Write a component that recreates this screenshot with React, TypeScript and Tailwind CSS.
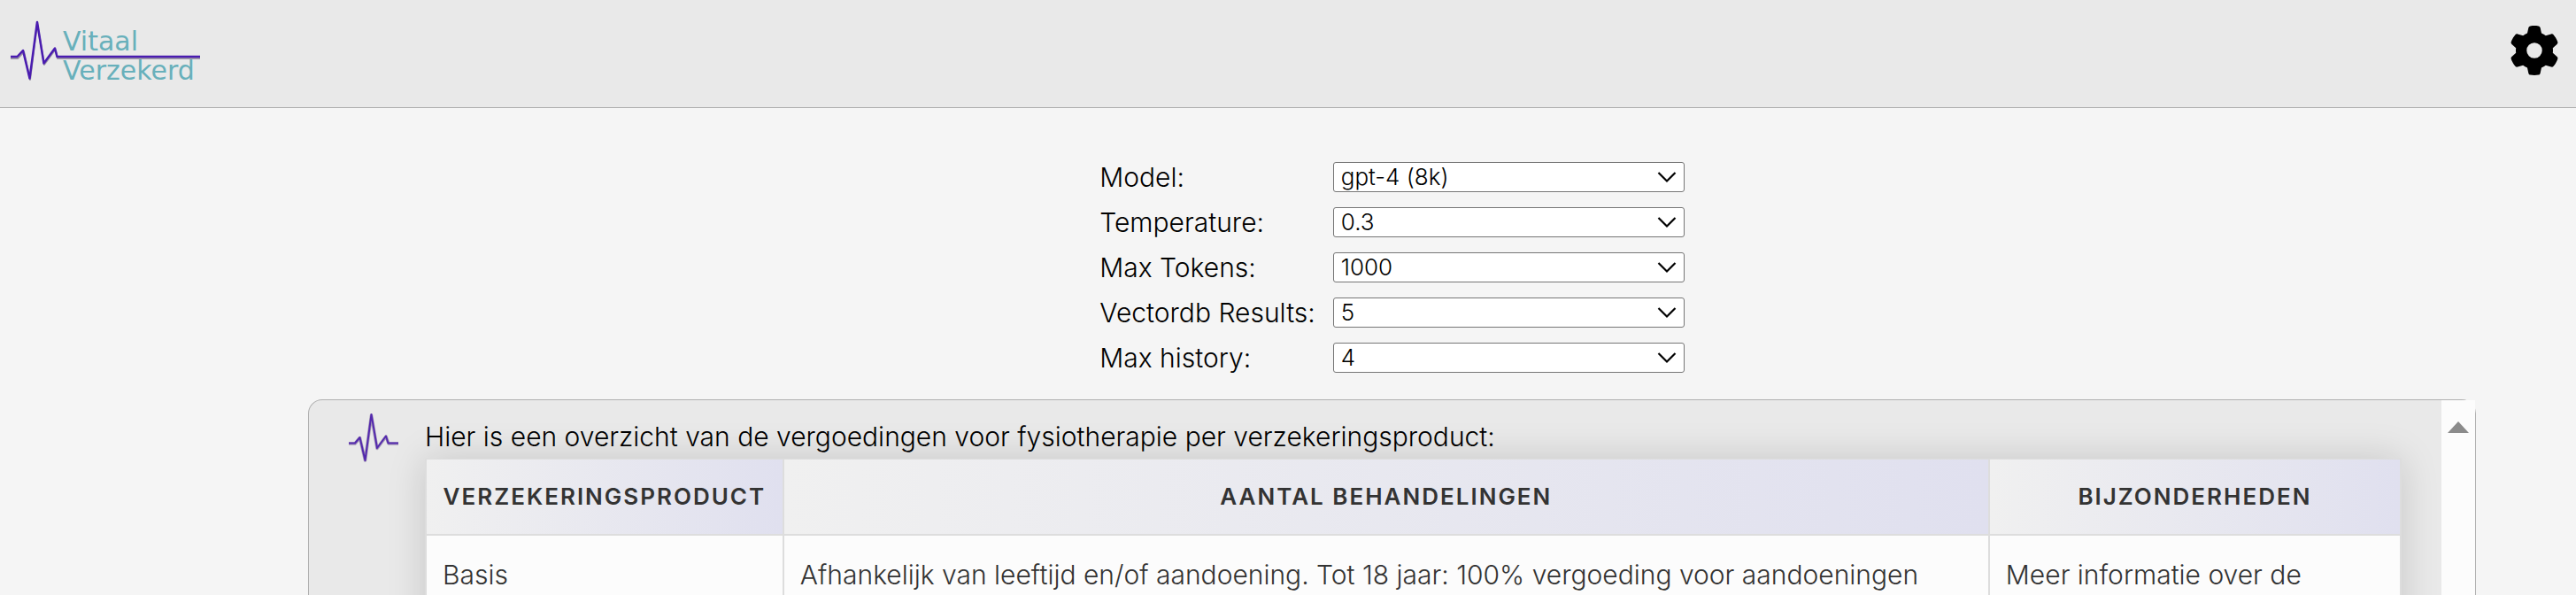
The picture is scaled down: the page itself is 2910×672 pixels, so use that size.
import React from "react";
import { FaGear } from "react-icons/fa6";

const settings = [
  { id: "model", label: "Model:", options: ["gpt-4 (8k)", "gpt-4 (32k)"] },
  { id: "temperature", label: "Temperature:", options: ["0.3", "0.7"] },
  { id: "max-tokens", label: "Max Tokens:", options: ["1000", "2000"] },
  { id: "vectordb-results", label: "Vectordb Results:", options: ["5", "10"] },
  { id: "max-history", label: "Max history:", options: ["4", "8"] },
];

const columns = ["Verzekeringsproduct", "Aantal behandelingen", "Bijzonderheden"];

const rows = [
  [
    "Basis",
    "Afhankelijk van leeftijd en/of aandoening. Tot 18 jaar: 100% vergoeding voor aandoeningen",
    "Meer informatie over de",
  ],
];

function Logo() {
  return (
    <a href="#" aria-label="Vitaal Verzekerd" className="block">
      <svg width="232" height="121" viewBox="0 0 232 121" role="img" aria-label="Vitaal Verzekerd">
        <path
          d="M12 66H20L27 58.500L34 90L42 26.500L50 73L62.500 56L65 66H226"
          fill="none"
          stroke="#9c96a6"
          strokeWidth="2"
          strokeLinejoin="round"
        />
        <path
          d="M12 64H19.500L26 57L33.500 88.500L42 25L49.500 71.500L62 54.500L64.500 64H226"
          fill="none"
          stroke="#4a1cb0"
          strokeWidth="2.500"
          strokeLinejoin="round"
        />
        <g fill="#68b0bb" fontFamily="DejaVu Sans, sans-serif" fontSize="30" fontWeight="400">
          <text x="71" y="57">Vitaal</text>
          <text x="71" y="90">Verzekerd</text>
        </g>
      </svg>
    </a>
  );
}

function PulseIcon() {
  return (
    <svg width="56" height="56" viewBox="0 0 56 56" className="block shrink-0" aria-hidden="true">
      <path
        d="M0 34H7L12.500 27.500L18.500 53L25.500 2L32 39.500L42 26L45 34H56"
        fill="none"
        stroke="#a79bb8"
        strokeWidth="3.500"
        strokeLinejoin="round"
      />
      <path
        d="M0 33.500H7L12.500 27L18.500 53L25.500 1L32 39L42 25.500L44.500 33.500H56"
        fill="none"
        stroke="#5429ae"
        strokeWidth="2"
        strokeLinejoin="round"
      />
    </svg>
  );
}

function SettingsForm() {
  return (
    <form className="mx-auto grid grid-cols-[auto_397px] items-center gap-x-5 gap-y-[15px]">
      {settings.map((s) => (
        <React.Fragment key={s.id}>
          <label htmlFor={s.id} className="text-[30px] leading-9">
            {s.label}
          </label>
          <div className="grid items-center">
            <select
              id={s.id}
              className="col-start-1 row-start-1 h-[34px] w-full appearance-none rounded-[3px] border border-[#767676] bg-white pr-10 pl-2 text-[26px] leading-8"
            >
              {s.options.map((o) => (
                <option key={o}>{o}</option>
              ))}
            </select>
            <svg
              width="22"
              height="14"
              viewBox="0 0 22 14"
              aria-hidden="true"
              className="pointer-events-none col-start-1 row-start-1 mr-[9px] justify-self-end"
            >
              <path d="M1.500 2L11 11.500L20.500 2" fill="none" stroke="#000" strokeWidth="2.200" />
            </svg>
          </div>
        </React.Fragment>
      ))}
    </form>
  );
}

export default function App() {
  return (
    <div className="flex h-screen flex-col overflow-hidden bg-[#f5f5f5] font-['Inter',sans-serif] font-light text-black">
      <header className="flex shrink-0 items-center justify-between border-b border-[#b0b0b0] bg-[#e9e9e9] pr-[19px]">
        <Logo />
        <button type="button" aria-label="Instellingen" className="mb-2">
          <FaGear className="size-14" />
        </button>
      </header>

      <main className="flex min-h-0 flex-1 flex-col gap-[29px] pt-[60px] pr-[113px] pl-[348px]">
        <SettingsForm />

        <section className="flex min-h-0 flex-1 rounded-tl-2xl rounded-tr-2xl border border-b-0 border-[#b0b0b0] bg-[#e9e9e9]">
          <article className="flex min-w-0 flex-1 gap-[30px] pt-[15px] pr-[45px] pl-[45px]">
            <PulseIcon />
            <div className="min-w-0 flex-1 pt-1">
              <p className="pb-[3px] text-[30px] leading-[44px]">
                Hier is een overzicht van de vergoedingen voor fysiotherapie per verzekeringsproduct:
              </p>
              <table className="h-full w-full table-fixed border-collapse bg-[#fcfcfc] text-[#333] shadow-[0_0_40px_rgba(0,0,0,0.15)]">
                <colgroup>
                  <col className="w-[18.100%]" />
                  <col />
                  <col className="w-[20.850%]" />
                </colgroup>
                <thead>
                  <tr>
                    {columns.map((c) => (
                      <th
                        key={c}
                        scope="col"
                        className="h-[85px] border-2 border-t border-[#ddd] bg-linear-to-r from-[#f0f0f0] to-[#e0e0ef] bg-clip-padding text-center text-[26px] font-semibold tracking-[2px] uppercase"
                      >
                        {c}
                      </th>
                    ))}
                  </tr>
                </thead>
                <tbody>
                  {rows.map((r) => (
                    <tr key={r[0]}>
                      {r.map((cell) => (
                        <td
                          key={cell}
                          className="border-2 border-[#ddd] px-[18px] pt-[23px] text-left align-top text-[30px] leading-[43px]"
                        >
                          {cell}
                        </td>
                      ))}
                    </tr>
                  ))}
                </tbody>
              </table>
            </div>
          </article>
          <div className="flex w-[38px] shrink-0 justify-center bg-[#fcfcfc] pt-6" aria-hidden="true">
            <svg width="24" height="13" viewBox="0 0 24 13">
              <path d="M12 0L24 13H0Z" fill="#8b8b8b" />
            </svg>
          </div>
        </section>
      </main>
    </div>
  );
}
